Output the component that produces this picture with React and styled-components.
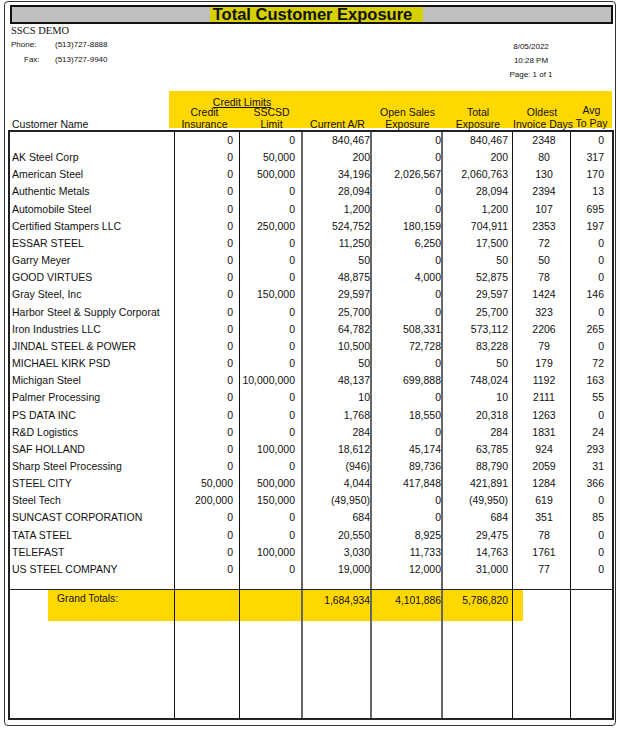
import React from 'react';
import styled, { createGlobalStyle } from 'styled-components';

const yellow = '#ffd800';
const font = "'Liberation Sans', Arial, sans-serif";

const GlobalStyle = createGlobalStyle`
  html, body {
    margin: 0;
    padding: 0;
    background: #ffffff;
  }
  body {
    font-family: ${font};
    color: #111111;
  }
`;

// column widths, borders and text placement shared by body and totals
const columns = [
  { w: 165, align: 'left', pad: '0 0 0 2px', line: '1px solid #111' },
  { w: 65, align: 'right', pad: '0 6px 0 0', line: '1px solid #111' },
  { w: 63, align: 'right', pad: '0 6px 0 0', line: '2px solid #666' },
  { w: 69, align: 'right', pad: '0', line: '2px solid #666' },
  { w: 71, align: 'right', pad: '0', line: '2px solid #666' },
  { w: 70, align: 'right', pad: '0 4px 0 0', line: '1px solid #111' },
  { w: 58, align: 'center', pad: '0 0 0 5px', line: '1px solid #111' },
  { w: 43, align: 'right', pad: '0 8px 0 0', line: '2px solid #222' },
];

const customers = [
  ['', '0', '0', '840,467', '0', '840,467', '2348', '0'],
  ['AK Steel Corp', '0', '50,000', '200', '0', '200', '80', '317'],
  ['American Steel', '0', '500,000', '34,196', '2,026,567', '2,060,763', '130', '170'],
  ['Authentic Metals', '0', '0', '28,094', '0', '28,094', '2394', '13'],
  ['Automobile Steel', '0', '0', '1,200', '0', '1,200', '107', '695'],
  ['Certified Stampers LLC', '0', '250,000', '524,752', '180,159', '704,911', '2353', '197'],
  ['ESSAR STEEL', '0', '0', '11,250', '6,250', '17,500', '72', '0'],
  ['Garry Meyer', '0', '0', '50', '0', '50', '50', '0'],
  ['GOOD VIRTUES', '0', '0', '48,875', '4,000', '52,875', '78', '0'],
  ['Gray Steel, Inc', '0', '150,000', '29,597', '0', '29,597', '1424', '146'],
  ['Harbor Steel & Supply Corporat', '0', '0', '25,700', '0', '25,700', '323', '0'],
  ['Iron Industries LLC', '0', '0', '64,782', '508,331', '573,112', '2206', '265'],
  ['JINDAL STEEL & POWER', '0', '0', '10,500', '72,728', '83,228', '79', '0'],
  ['MICHAEL KIRK PSD', '0', '0', '50', '0', '50', '179', '72'],
  ['Michigan Steel', '0', '10,000,000', '48,137', '699,888', '748,024', '1192', '163'],
  ['Palmer Processing', '0', '0', '10', '0', '10', '2111', '55'],
  ['PS DATA INC', '0', '0', '1,768', '18,550', '20,318', '1263', '0'],
  ['R&D Logistics', '0', '0', '284', '0', '284', '1831', '24'],
  ['SAF HOLLAND', '0', '100,000', '18,612', '45,174', '63,785', '924', '293'],
  ['Sharp Steel Processing', '0', '0', '(946)', '89,736', '88,790', '2059', '31'],
  ['STEEL CITY', '50,000', '500,000', '4,044', '417,848', '421,891', '1284', '366'],
  ['Steel Tech', '200,000', '150,000', '(49,950)', '0', '(49,950)', '619', '0'],
  ['SUNCAST CORPORATION', '0', '0', '684', '0', '684', '351', '85'],
  ['TATA STEEL', '0', '0', '20,550', '8,925', '29,475', '78', '0'],
  ['TELEFAST', '0', '100,000', '3,030', '11,733', '14,763', '1761', '0'],
  ['US STEEL COMPANY', '0', '0', '19,000', '12,000', '31,000', '77', '0'],
];

const totals = ['', '', '', '1,684,934', '4,101,886', '5,786,820', '', ''];

const Frame = styled.div`
  box-sizing: border-box;
  width: 612px;
  height: 725px;
  margin: 1px 0 0 4px;
  border: 1px solid #333;
  border-radius: 4px;
  display: flex;
  flex-direction: column;
`;

const TitleBar = styled.div`
  box-sizing: border-box;
  width: 603px;
  height: 19px;
  margin: 3px 0 0 5px;
  border: 2px solid #111;
  background: #c0c0c0;
  display: flex;
  justify-content: center;
  align-items: center;
`;

const TitleText = styled.h1`
  margin: 0 0 0 10px;
  padding: 0 11px 0 3px;
  background: #d6d000;
  font: bold 16.5px ${font};
  line-height: 15px;
  color: #111;
`;

const Info = styled.div`
  height: 67px;
  display: flex;
`;

const Company = styled.div`
  padding-left: 6px;
  width: 200px;
`;

const CompanyName = styled.div`
  font: 10.5px 'Liberation Serif', 'Times New Roman', serif;
  line-height: 11.5px;
  height: 11.5px;
  padding-top: 1px;
`;

const ContactRow = styled.div`
  display: grid;
  grid-template-columns: ${p => 44 - (p.$indent || 0)}px auto;
  height: 15px;
  align-items: center;
  font-size: 8px;
  padding-left: ${p => p.$indent || 0}px;
`;

const Stamp = styled.div`
  margin-left: 290px;
  width: 60px;
  padding-top: 16px;
  text-align: center;
  font-size: 8px;
  line-height: 14px;
`;

const HeaderRow = styled.div`
  display: flex;
  align-items: flex-end;
  height: 37px;
  margin-left: 3px;
  font-size: 10.5px;
  line-height: 11.5px;
`;

const NameHead = styled.div`
  width: 161px;
  box-sizing: border-box;
  padding-left: 4px;
  margin-bottom: -2px;
`;

const YellowHead = styled.div`
  width: 443px;
  height: 37px;
  background: ${yellow};
  display: grid;
  grid-template-columns: 71px 63px 69px 71px 70px 58px 41px;
  grid-template-rows: 1fr auto;
  align-items: end;
`;

const GroupHead = styled.div`
  grid-column: 1 / 3;
  grid-row: 1;
  text-align: center;
  padding-left: 12px;
  text-decoration: underline;
  margin-bottom: -1px;
`;

const ColHead = styled.div`
  grid-column: ${p => p.$col};
  grid-row: ${p => (p.$sub ? 2 : '1 / 3')};
  text-align: center;
  white-space: nowrap;
  margin-bottom: -2px;
  line-height: ${p => (p.$tall ? 13 : 11.5)}px;
`;

const Table = styled.div`
  box-sizing: border-box;
  width: 606px;
  height: 590px;
  margin: 2px 0 0 3px;
  border-top: 2px solid #222;
  border-left: 2px solid #222;
  border-bottom: 2px solid #222;
  display: flex;
  flex-direction: column;
`;

const Section = styled.div`
  height: ${p => p.$h}px;
  display: flex;
  flex-direction: column;
  border-bottom: ${p => (p.$divider ? '1px solid #222' : 'none')};
`;

const Row = styled.div`
  display: grid;
  grid-template-columns: ${columns.map(c => c.w + 'px').join(' ')};
  height: ${p => p.$h};
  flex: ${p => (p.$fill ? 1 : 'none')};
`;

const Cell = styled.div`
  box-sizing: border-box;
  border-right: ${p => p.$line};
  padding: ${p => p.$pad};
  text-align: ${p => p.$align};
  font-size: 10.5px;
  line-height: 17.16px;
  white-space: nowrap;
  overflow: hidden;
  background: ${p => (p.$hl ? yellow : 'transparent')};
`;

const TotalCell = styled(Cell)`
  line-height: 12px;
  padding-top: 5px;
  font-size: 10.3px;
`;

const TotalsLabel = styled.div`
  box-sizing: border-box;
  margin-left: 38px;
  height: 31px;
  background: ${yellow};
  padding: 3px 0 0 9px;
  font-size: 10.3px;
  line-height: 12px;
`;

const Spill = styled.div`
  width: 10px;
  height: 31px;
  background: ${yellow};
`;

const App = () => {
  return (
    <>
      <GlobalStyle />
      <Frame>
        <TitleBar>
          <TitleText>Total Customer Exposure</TitleText>
        </TitleBar>

        <Info>
          <Company>
            <CompanyName>SSCS DEMO</CompanyName>
            <ContactRow><span>Phone:</span><span>(513)727-8888</span></ContactRow>
            <ContactRow $indent={13}><span>Fax:</span><span>(513)727-9940</span></ContactRow>
          </Company>
          <Stamp>
            <div>8/05/2022</div>
            <div>10:28 PM</div>
            <div>Page: 1 of 1</div>
          </Stamp>
        </Info>

        <HeaderRow>
          <NameHead>Customer Name</NameHead>
          <YellowHead>
            <GroupHead>Credit Limits</GroupHead>
            <ColHead $col={1} $sub>Credit<br />Insurance</ColHead>
            <ColHead $col={2} $sub>SSCSD<br />Limit</ColHead>
            <ColHead $col={3}>Current A/R</ColHead>
            <ColHead $col={4}>Open Sales<br />Exposure</ColHead>
            <ColHead $col={5}>Total<br />Exposure</ColHead>
            <ColHead $col={6}>Oldest<br />Invoice Days</ColHead>
            <ColHead $col={7} $tall>Avg<br />To Pay</ColHead>
          </YellowHead>
        </HeaderRow>

        <Table>
          <Section $h={457} $divider>
            {customers.map((row, i) => (
              <Row key={i} $h="17.16px">
                {row.map((v, j) => (
                  <Cell key={j} $line={columns[j].line} $pad={columns[j].pad} $align={columns[j].align}>
                    {v}
                  </Cell>
                ))}
              </Row>
            ))}
            <Row $fill>
              {columns.map((c, j) => <Cell key={j} $line={c.line} />)}
            </Row>
          </Section>

          <Section $h={128}>
            <Row $h="31px">
              {totals.map((v, j) => {
                const c = columns[j];
                if (j === 0) {
                  return (
                    <Cell key={j} $line={c.line}>
                      <TotalsLabel>Grand Totals:</TotalsLabel>
                    </Cell>
                  );
                }
                if (j === 6) {
                  return (
                    <Cell key={j} $line={c.line}>
                      <Spill />
                    </Cell>
                  );
                }
                return (
                  <TotalCell key={j} $line={c.line} $pad={c.pad} $align={c.align} $hl={j < 6}>
                    {v}
                  </TotalCell>
                );
              })}
            </Row>
            <Row $fill>
              {columns.map((c, j) => <Cell key={j} $line={c.line} />)}
            </Row>
          </Section>
        </Table>
      </Frame>
    </>
  );
};

export default App;
